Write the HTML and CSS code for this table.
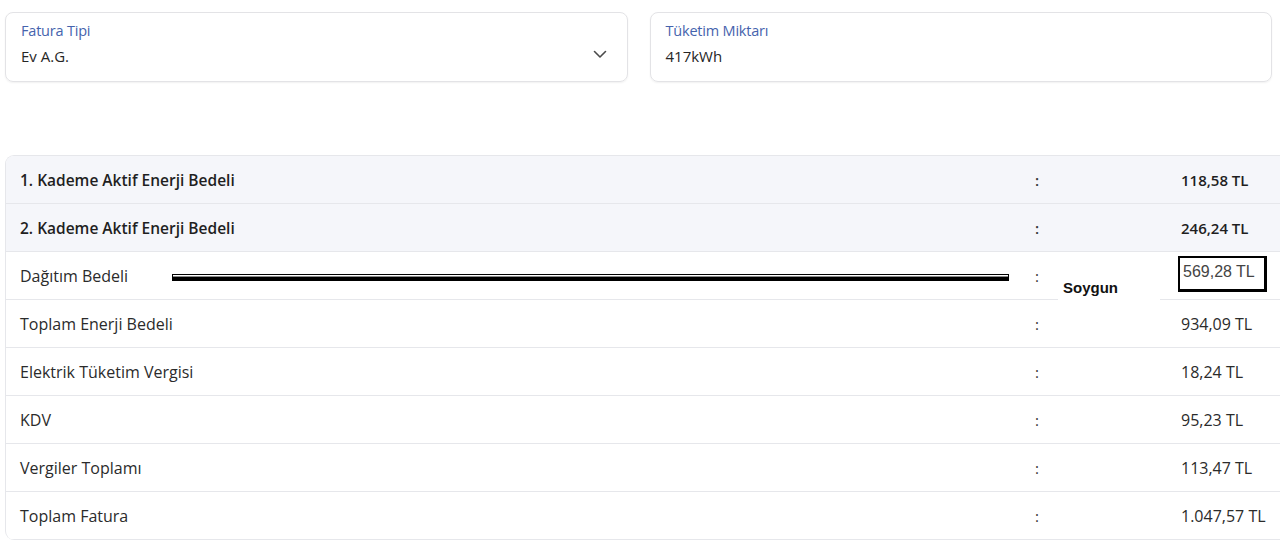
FILE: index.html
```html
<!DOCTYPE html>
<html lang="tr">
<head>
<meta charset="utf-8">
<title>Fatura Hesaplama</title>
<link rel="stylesheet" href="styles.css">
</head>
<body>
<div class="page">
  <div class="fields">
    <div class="field field-select">
      <div class="field-text">
        <div class="field-label">Fatura Tipi</div>
        <div class="field-value">Ev A.G.</div>
      </div>
      <svg class="chevron" width="14" height="9" viewBox="0 0 14 9"><path d="M1.5 1.5 L7 7 L12.5 1.5" fill="none" stroke="#4a4a4a" stroke-width="1.6" stroke-linecap="round" stroke-linejoin="round"/></svg>
    </div>
    <div class="field">
      <div class="field-text">
        <div class="field-label">Tüketim Miktarı</div>
        <div class="field-value">417kWh</div>
      </div>
    </div>
  </div>

  <div class="table">
    <div class="row row-bold"><div class="cell-label">1. Kademe Aktif Enerji Bedeli</div><div class="cell-colon">:</div><div class="cell-value">118,58 TL</div></div>
    <div class="row row-bold"><div class="cell-label">2. Kademe Aktif Enerji Bedeli</div><div class="cell-colon">:</div><div class="cell-value">246,24 TL</div></div>
    <div class="row row-edit"><div class="cell-label">Dağıtım Bedeli</div><div class="cell-colon">:</div><div class="cell-value"></div>
      <div class="strike-line"></div>
      <div class="note">Soygun</div>
      <div class="boxed">569,28 TL</div>
    </div>
    <div class="row"><div class="cell-label">Toplam Enerji Bedeli</div><div class="cell-colon">:</div><div class="cell-value">934,09 TL</div></div>
    <div class="row"><div class="cell-label">Elektrik Tüketim Vergisi</div><div class="cell-colon">:</div><div class="cell-value">18,24 TL</div></div>
    <div class="row"><div class="cell-label">KDV</div><div class="cell-colon">:</div><div class="cell-value">95,23 TL</div></div>
    <div class="row"><div class="cell-label">Vergiler Toplamı</div><div class="cell-colon">:</div><div class="cell-value">113,47 TL</div></div>
    <div class="row"><div class="cell-label">Toplam Fatura</div><div class="cell-colon">:</div><div class="cell-value">1.047,57 TL</div></div>
  </div>
</div>
</body>
</html>
```
FILE: styles.css
```css
html, body {
  margin: 0;
  padding: 0;
  background: #ffffff;
  overflow: hidden;
}
body {
  font-family: "Open Sans", "DejaVu Sans", sans-serif;
  color: #2a2a2a;
}
.page {
  padding: 12px 8px 0 5px;
}
.fields {
  display: grid;
  grid-template-columns: 1fr 1fr;
  gap: 22px;
}
.field {
  height: 70px;
  box-sizing: border-box;
  border: 1px solid #e3e3e6;
  border-radius: 8px;
  box-shadow: 0 1px 2px rgba(0,0,0,0.06);
  padding: 9px 15px 0 15px;
  display: flex;
  align-items: flex-start;
  justify-content: space-between;
}
.field-label {
  font-size: 14.5px;
  line-height: 18px;
  color: #4563ad;
  letter-spacing: -0.2px;
}
.field-value {
  margin-top: 5px;
  font-size: 15px;
  line-height: 22px;
  color: #262626;
}
.chevron {
  margin-top: 28px;
  margin-right: 5px;
}
.table {
  margin-top: 73px;
  width: 1300px;
  border-top: 1px solid #e6e7eb;
  border-left: 1px solid #e6e7eb;
  border-radius: 9px 0 0 9px;
  overflow: hidden;
}
.row {
  display: grid;
  grid-template-columns: 1015px 146px 1fr;
  align-items: center;
  height: 47px;
  border-bottom: 1px solid #e6e7eb;
  padding-left: 14px;
  font-size: 16px;
  color: #2b2b2b;
}
.row-bold {
  background: #f5f6fa;
  font-weight: 600;
  font-size: 15.5px;
  color: #1f1f1f;
}
.row-bold .cell-value {
  font-size: 15px;
}
.cell-colon {
  font-size: 15px;
  color: #333;
}
.row-edit {
  position: relative;
}
.strike-line {
  position: absolute;
  left: 166px;
  top: 22px;
  width: 835px;
  height: 5px;
  border: 1px solid #000;
  background: linear-gradient(#ffffff 0 1px, #8a8a8a 1px 2px, #000 2px 100%);
}
.note {
  position: absolute;
  left: 1052px;
  top: 23px;
  width: 102px;
  height: 26px;
  box-sizing: border-box;
  padding: 4px 0 0 5px;
  background: #ffffff;
  font-family: "Liberation Sans", Arial, sans-serif;
  font-weight: 700;
  font-size: 15px;
  line-height: 17px;
  color: #111;
}
.boxed {
  position: absolute;
  left: 1172px;
  top: 4px;
  width: 89px;
  height: 36px;
  box-sizing: border-box;
  border-style: solid;
  border-color: #000;
  border-width: 2px 3px 3px 2px;
  padding: 4px 0 0 3px;
  background: #ffffff;
  font-family: "Liberation Sans", Arial, sans-serif;
  font-size: 16px;
  line-height: 20px;
  color: #444;
}
```
